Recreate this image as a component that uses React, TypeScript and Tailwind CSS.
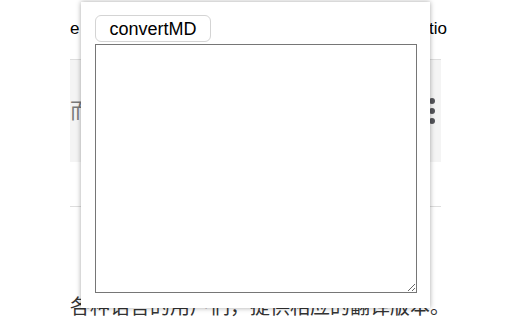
import React from "react";

const sans = { fontFamily: '"Liberation Sans", Arial, "Noto Sans CJK SC", sans-serif' };

function PageBehind() {
  return (
    <div className="ml-[70px] w-[371px] text-black" style={sans}>
      {/* title row, mostly under the popup */}
      <div className="flex h-[59px] items-center justify-between pb-[1px] text-[17px]">
        <span>e</span>
        <span className="-mr-[6px]">tio</span>
      </div>
      <div className="h-px bg-[#dedede]" />
      <div className="flex h-[102px] items-center justify-between bg-[#f4f4f4] pr-[6px]">
        <span className="text-[21px] text-[#7a7a7a]">而已</span>
        <div className="flex flex-col gap-[4px]">
          <span className="h-[6px] w-[6px] rounded-full bg-[#55565b]" />
          <span className="h-[6px] w-[6px] rounded-full bg-[#55565b]" />
          <span className="h-[6px] w-[6px] rounded-full bg-[#55565b]" />
        </div>
      </div>
      <div className="h-[44px]" />
      <div className="h-px bg-[#dedede]" />
      <div className="pt-[88px] text-[20px] leading-[24px] whitespace-nowrap text-[#333]">
        各种语言的用户们，提供相应的翻译版本。
      </div>
    </div>
  );
}

function Popup() {
  return (
    <div
      className="absolute left-[81px] top-[2px] flex h-[306px] w-[349px] flex-col bg-white pl-[14px] pt-[13px] shadow-[0_0_5px_rgba(0,0,0,0.35)]"
      style={sans}
    >
      <button className="h-[27px] w-[116px] rounded-[6px] border border-[#d4d4d4] bg-white text-[18px] leading-none text-black">
        convertMD
      </button>
      <textarea className="mt-[2px] h-[249px] w-[322px] resize border border-[#767676] bg-white outline-none" />
    </div>
  );
}

export default function App() {
  return (
    <div className="relative h-[320px] w-[512px] overflow-hidden bg-white">
      <PageBehind />
      <Popup />
    </div>
  );
}
